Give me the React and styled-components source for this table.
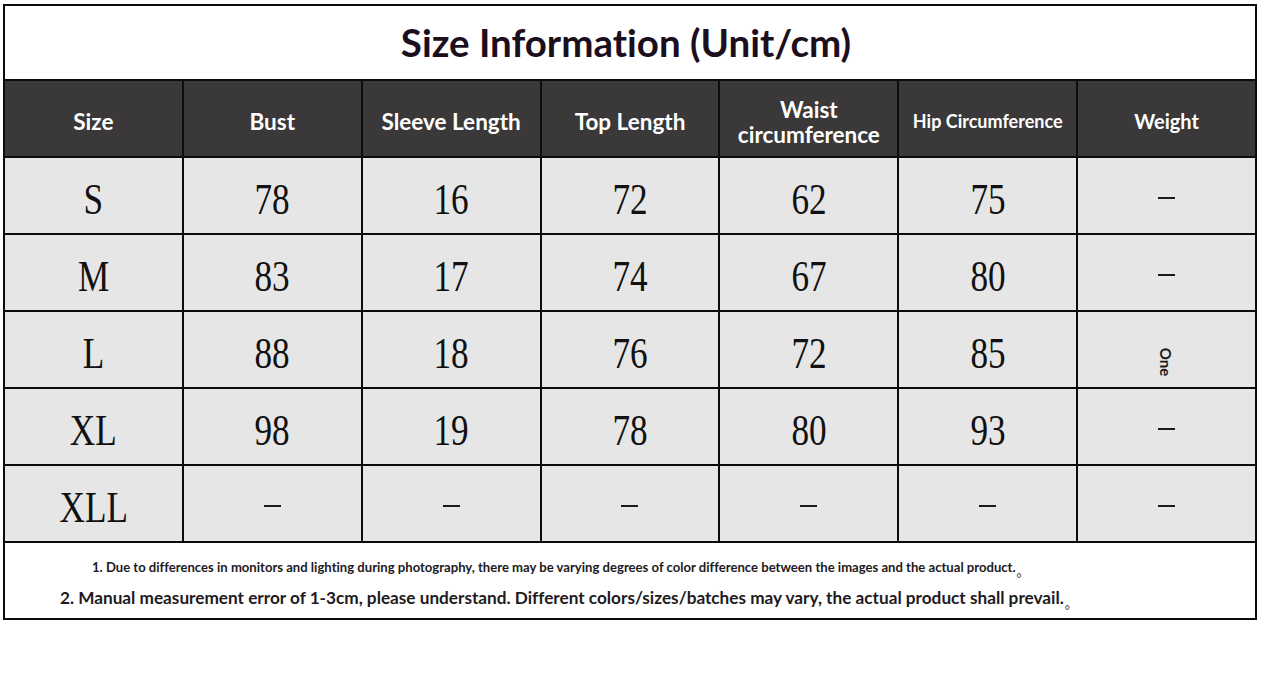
import React from "react";
import styled, { createGlobalStyle } from "styled-components";

const GlobalStyle = createGlobalStyle`
  html, body {
    margin: 0;
    padding: 0;
    background: #ffffff;
  }
`;

const Page = styled.div`
  padding: 4px 0 0 3px;
  width: 1261px;
  height: 673px;
  box-sizing: border-box;
  background: #ffffff;
`;

const Board = styled.div`
  width: 1254px;
  display: grid;
  grid-template-columns: repeat(7, 1fr);
  grid-template-rows: 73px repeat(6, 75px) 75px;
  gap: 2px;
  padding: 2px;
  box-sizing: border-box;
  background: #0c0c0c;
`;

const Title = styled.div`
  grid-column: 1 / -1;
  background: #ffffff;
  display: flex;
  align-items: center;
  justify-content: center;
  padding: 0 8px 2px 0;
  box-sizing: border-box;
  font-family: Lato, "Open Sans", sans-serif;
  font-weight: 700;
  font-size: 38.5px;
  font-variant-ligatures: none;
  color: #1c0f1d;
`;

const HeadCell = styled.div`
  background: #3a3838;
  color: #ffffff;
  display: flex;
  align-items: center;
  justify-content: center;
  text-align: center;
  padding-top: 6px;
  box-sizing: border-box;
  font-family: Lato, "Open Sans", sans-serif;
  font-weight: 700;
  font-size: ${p => p.$size || 22.5}px;
  line-height: 25px;
  font-variant-ligatures: none;
`;

const Cell = styled.div`
  background: #e6e6e6;
  display: flex;
  align-items: center;
  justify-content: center;
  padding-top: 8px;
  box-sizing: border-box;
  color: #111111;
`;

const Value = styled.span`
  display: inline-block;
  font-family: "Liberation Serif", "DejaVu Serif", serif;
  font-size: 44px;
  line-height: 1;
  transform: scaleX(0.8);
`;

const Dash = styled.span`
  display: block;
  width: 17px;
  height: 1.5px;
  margin-top: -3px;
  background: #1a1a1a;
`;

const Rotated = styled.span`
  display: inline-block;
  margin-top: 17px;
  transform: rotate(90deg);
  font-family: Lato, "Open Sans", sans-serif;
  font-weight: 700;
  font-size: 15px;
  color: #1a1a1a;
`;

const Footer = styled.div`
  grid-column: 1 / -1;
  background: #ffffff;
  display: flex;
  flex-direction: column;
  font-family: Lato, "Open Sans", sans-serif;
  font-weight: 700;
  font-variant-ligatures: none;
  color: #1e1a1e;
`;

const Note = styled.div`
  font-size: ${p => p.$big ? "17.2px" : "13.1px"};
  padding-left: ${p => p.$indent}px;
  margin-top: ${p => p.$top}px;
  line-height: 20px;
  white-space: nowrap;
`;

const Stop = styled.span`
  font-family: "Noto Sans CJK SC", sans-serif;
  font-weight: 400;
  font-size: 13px;
  margin-left: 1px;
  position: relative;
  top: 4px;
`;

const headers = [
  { label: "Size" },
  { label: "Bust" },
  { label: "Sleeve Length" },
  { label: "Top Length" },
  { label: <>Waist<br />circumference</> },
  { label: "Hip Circumference", size: 18 },
  { label: "Weight", size: 20 },
];

const rows = [
  ["S", "78", "16", "72", "62", "75", null],
  ["M", "83", "17", "74", "67", "80", null],
  ["L", "88", "18", "76", "72", "85", "One"],
  ["XL", "98", "19", "78", "80", "93", null],
  ["XLL", null, null, null, null, null, null],
];

export default function App() {
  return (
    <>
      <GlobalStyle />
      <Page>
        <Board>
          <Title>Size Information (Unit/cm)</Title>
          {headers.map((h, i) => (
            <HeadCell key={i} $size={h.size}>{h.label}</HeadCell>
          ))}
          {rows.map((row, r) =>
            row.map((v, c) => (
              <Cell key={`${r}-${c}`}>
                {v === null ? (
                  <Dash />
                ) : v === "One" ? (
                  <Rotated>One</Rotated>
                ) : (
                  <Value>{v}</Value>
                )}
              </Cell>
            ))
          )}
          <Footer>
            <Note $indent={87} $top={14}>
              1. Due to differences in monitors and lighting during photography, there may be varying degrees of color difference between the images and the actual product.<Stop>。</Stop>
            </Note>
            <Note $big $indent={55} $top={11}>
              2. Manual measurement error of 1-3cm, please understand. Different colors/sizes/batches may vary, the actual product shall prevail.<Stop>。</Stop>
            </Note>
          </Footer>
        </Board>
      </Page>
    </>
  );
}
